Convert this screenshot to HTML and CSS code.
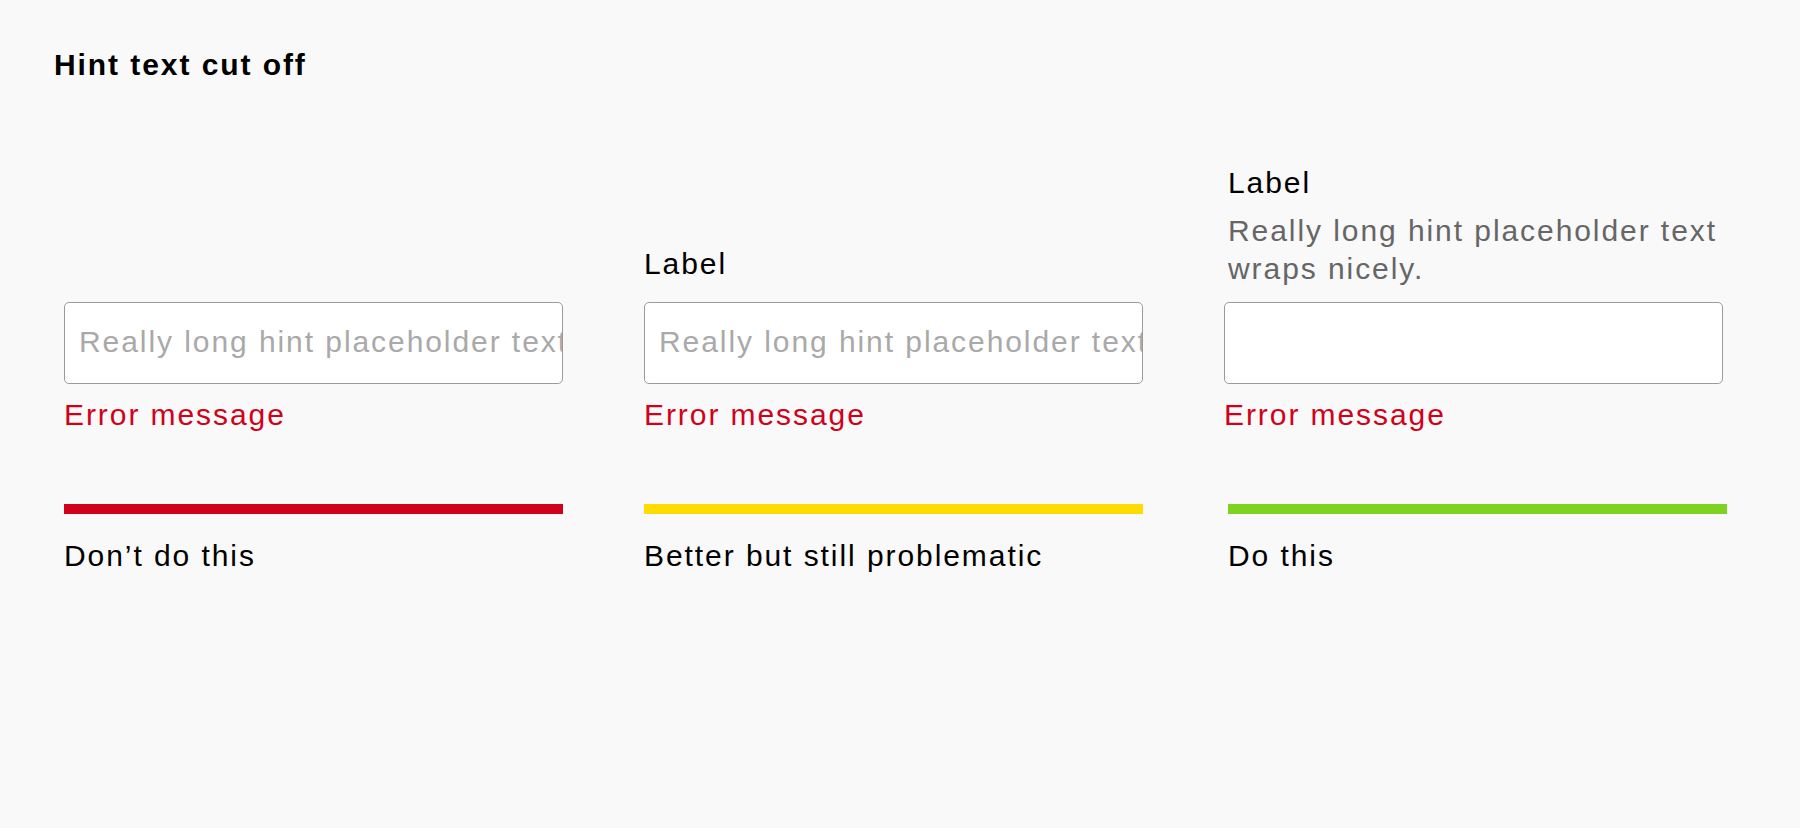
FILE: index.html
```html
<!DOCTYPE html>
<html lang="en">
<head>
<meta charset="utf-8">
<title>Hint text cut off</title>
<link rel="stylesheet" href="styles.css">
</head>
<body>
<main class="page">
  <h1 class="title">Hint text cut off</h1>
  <div class="columns">
    <section class="col">
      <div class="head"></div>
      <input class="field" type="text" placeholder="Really long hint placeholder text wraps nicely.">
      <p class="error">Error message</p>
      <div class="bar bar--bad"></div>
      <p class="caption">Don’t do this</p>
    </section>
    <section class="col">
      <div class="head">
        <label class="label label--solo">Label</label>
      </div>
      <input class="field" type="text" placeholder="Really long hint placeholder text wraps nicely.">
      <p class="error">Error message</p>
      <div class="bar bar--meh"></div>
      <p class="caption">Better but still problematic</p>
    </section>
    <section class="col col--shift">
      <div class="head">
        <label class="label">Label</label>
        <p class="hint">Really long hint placeholder text wraps nicely.</p>
      </div>
      <input class="field" type="text">
      <p class="error">Error message</p>
      <div class="bar bar--good"></div>
      <p class="caption">Do this</p>
    </section>
  </div>
</main>
</body>
</html>
```

FILE: styles.css
```css
html, body {
  margin: 0;
  padding: 0;
  background: #f9f9f9;
}

body {
  font-family: "Liberation Sans", Arial, sans-serif;
  color: #000;
  font-size: 30px;
  letter-spacing: 1.93px;
}

.page {
  padding: 48px 0 0 54px;
}

.title {
  margin: 0;
  font-size: 30px;
  line-height: 34px;
  font-weight: 700;
  letter-spacing: 1.93px;
}

.columns {
  display: grid;
  grid-template-columns: repeat(3, 499px);
  column-gap: 81px;
  margin-left: 10px;
}

.col {
  display: flex;
  flex-direction: column;
}

.head {
  height: 220px;
  display: flex;
  flex-direction: column;
  justify-content: flex-end;
}

.label {
  display: block;
  font-size: 30px;
  line-height: 34px;
  margin-bottom: 12px;
}

.label--solo {
  margin-bottom: 21px;
}

.hint {
  margin: 0 0 14px;
  font-size: 30px;
  line-height: 38px;
  color: #666;
}

.field {
  box-sizing: border-box;
  width: 499px;
  height: 82px;
  margin: 0;
  padding: 0 0 3px 14px;
  border: 1px solid #9b9b9b;
  border-radius: 5px;
  background: #fff;
  font-family: "Liberation Sans", Arial, sans-serif;
  font-size: 30px;
  letter-spacing: 1.93px;
  color: #000;
  outline: none;
}

.field::placeholder {
  color: #a9a9a9;
  opacity: 1;
}

.error {
  margin: 14px 0 0;
  font-size: 30px;
  line-height: 34px;
  color: #d0021b;
}

.bar {
  height: 10px;
  width: 499px;
  margin-top: 72px;
}

.bar--bad { background: #d0021b; }
.bar--meh { background: #ffdc00; }
.bar--good { background: #7ed321; }

.caption {
  margin: 25px 0 0;
  font-size: 30px;
  line-height: 34px;
}

.col--shift .head,
.col--shift .bar,
.col--shift .caption {
  margin-left: 4px;
}
```
